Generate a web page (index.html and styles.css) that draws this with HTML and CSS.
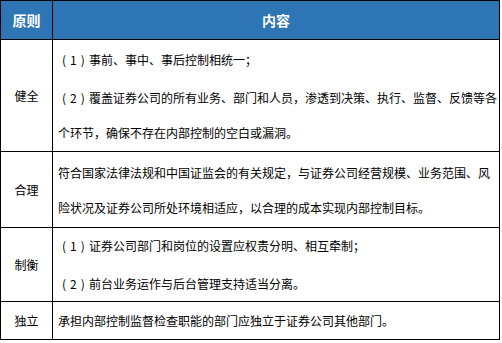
FILE: index.html
```html
<!DOCTYPE html>
<html lang="zh-CN">
<head>
<meta charset="utf-8">
<title>内部控制原则</title>
<link rel="stylesheet" href="styles.css">
</head>
<body>
<div class="table">
  <div class="cell head">原则</div>
  <div class="cell head">内容</div>

  <div class="cell name">健全</div>
  <div class="cell content">
    <p><span class="num">(1)</span>事前、事中、事后控制相统一；</p>
    <p><span class="num">(2)</span>覆盖证券公司的所有业务、部门和人员，渗透到决策、执行、监督、反馈等各<br>个环节，确保不存在内部控制的空白或漏洞。</p>
  </div>

  <div class="cell name">合理</div>
  <div class="cell content">
    <p>符合国家法律法规和中国证监会的有关规定，与证券公司经营规模、业务范围、风<br>险状况及证券公司所处环境相适应，以合理的成本实现内部控制目标。</p>
  </div>

  <div class="cell name">制衡</div>
  <div class="cell content">
    <p><span class="num">(1)</span>证券公司部门和岗位的设置应权责分明、相互牵制；</p>
    <p><span class="num">(2)</span>前台业务运作与后台管理支持适当分离。</p>
  </div>

  <div class="cell name">独立</div>
  <div class="cell content">
    <p>承担内部控制监督检查职能的部门应独立于证券公司其他部门。</p>
  </div>
</div>
</body>
</html>
```

FILE: styles.css
```css
html, body {
  margin: 0;
  padding: 0;
  background: #fff;
}

body {
  font-family: "Noto Sans CJK SC", "Noto Sans", sans-serif;
  color: #000;
}

.table {
  display: grid;
  grid-template-columns: 51px 446px;
  grid-template-rows: 38px 111px 75px 73px 37px;
  gap: 1px;
  padding: 1px;
  background: #000;
  width: 498px;
}

.cell {
  background: #fff;
  display: flex;
  flex-direction: column;
  justify-content: center;
  font-size: 12px;
}

.head {
  background: #2e75b6;
  color: #fff;
  font-weight: bold;
  font-size: 14px;
  align-items: center;
}

.name {
  align-items: center;
}

.content {
  padding-left: 5px;
  gap: 3px;
}

.content p {
  margin: 0;
  line-height: 35px;
  white-space: nowrap;
}

.num {
  display: inline-block;
  width: 31px;
  padding-left: 4px;
  box-sizing: border-box;
  letter-spacing: 4px;
}
```
